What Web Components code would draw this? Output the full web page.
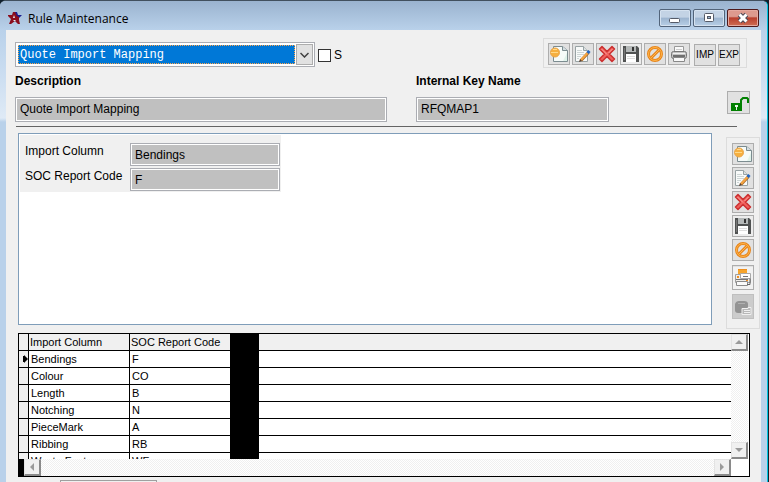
<!DOCTYPE html>
<html lang="en">
<head>
<meta charset="utf-8">
<title>Rule Maintenance</title>
<style>
    html, body {
        margin: 0;
        height: 100%;
        overflow: hidden;
        background: #10202c;
        font: 12px/14px "Liberation Sans", Arial, sans-serif;
        color: #000;
    }
    rm-window { height: 100%; }
    .top {
        display: flex;
        align-items: flex-start;
        padding: 8px 14px 0 9px;
    }
    .top rm-combo { flex: 0 1 300px; margin: 4px 3px 0 0; }
    .top rm-check { margin: 10px auto 0 0; }
    .names {
        display: flex;
        align-items: flex-start;
        padding: 6px 11px 4px 9px;
    }
    .names .description { flex: 372 1 0; margin-right: 29px; }
    .names .key { flex: 193 1 0; margin-right: 118px; }
    .names rm-button { margin-top: 17px; }
    hr {
        margin: 0 24px 6px 10px;
        border: 0;
        border-top: 1px solid #646464;
    }
    .detail {
        display: flex;
        align-items: flex-start;
        gap: 14px;
        padding: 0 1px 4px 12px;
    }
    .detail rm-panel { flex: 1; align-self: stretch; margin-bottom: 4px; }
    .detail rm-toolbar { margin-top: 4px; }
    rm-grid { margin: 0 11px 3px 12px; }
    .footer { padding-left: 54px; }
    .footer input {
        box-sizing: border-box;
        width: 97px;
        height: 23px;
        border: 1px solid #a0a0a0;
        background: #f0f0f0;
    }
</style>
</head>
<body>
<rm-window caption="Rule Maintenance">
    <div class="top">
        <rm-combo label="Rule" value="Quote Import Mapping"></rm-combo>
        <rm-check label="S"></rm-check>
        <rm-toolbar>
            <rm-button icon="new" label="New rule"></rm-button>
            <rm-button icon="edit" label="Edit rule"></rm-button>
            <rm-button icon="remove" label="Delete rule"></rm-button>
            <rm-button icon="save" label="Save rule"></rm-button>
            <rm-button icon="cancel" label="Cancel"></rm-button>
            <rm-button icon="print" label="Print"></rm-button>
            <rm-button class="text first">IMP</rm-button>
            <rm-button class="text">EXP</rm-button>
        </rm-toolbar>
    </div>
    <div class="names">
        <rm-field class="description" stacked label="Description" value="Quote Import Mapping"></rm-field>
        <rm-field class="key" stacked label="Internal Key Name" value="RFQMAP1"></rm-field>
        <rm-button class="lock" icon="unlock" label="Unlock"></rm-button>
    </div>
    <hr>
    <div class="detail">
        <rm-panel>
            <rm-field label="Import Column" value="Bendings"></rm-field>
            <rm-field label="SOC Report Code" value="F"></rm-field>
        </rm-panel>
        <rm-toolbar vertical>
            <rm-button icon="new" label="New row"></rm-button>
            <rm-button icon="edit" label="Edit row"></rm-button>
            <rm-button icon="remove" label="Delete row"></rm-button>
            <rm-button icon="save" label="Save row"></rm-button>
            <rm-button icon="cancel" label="Cancel row"></rm-button>
            <rm-button class="tall" icon="printall" label="Print rows"></rm-button>
            <rm-button class="tall" icon="paste" label="Paste" disabled></rm-button>
        </rm-toolbar>
    </div>
    <rm-grid></rm-grid>
    <div class="footer"><input aria-label="Status" readonly></div>
</rm-window>

<script>
const icons = {
    new: `<path d="M4.500 2.500h9l5 4v11h-14z" fill="#f6fbf9" stroke="#7c8c90"/>
        <path d="M13.500 2.500v4h5" fill="#d4dde0" stroke="#7c8c90"/>
        <path d="M14 17h4V9z" fill="#dff2ea"/>
        <circle cx="6" cy="8.500" r="4.500" fill="#f6b040" stroke="#eaa54a"/>
        <path d="M2 8.500h7M4 5.500h4" stroke="#ffd98a"/>`,
    edit: `<path d="M2.500 2.500h8l4 4v11h-12z" fill="#f8faf9" stroke="#98a2a4"/>
        <path d="M10.500 2.500v4h4" fill="#dce1e2" stroke="#98a2a4"/>
        <path d="M4 6.500h5M4 8.500h7M4 10.500h7M4 12.500h4M4 14.500h2" stroke="#ccd4d4"/>
        <path d="M8 16.500L15.500 8.500" stroke="#a86a2c" stroke-width="3"/>
        <path d="M8 16L15 8.500" stroke="#f6a540" stroke-width="2"/>
        <path d="M14.500 9l2-2" stroke="#2267c4" stroke-width="3"/>
        <path d="M6 18l1-3 2 2z" fill="#5a4030"/>`,
    remove: `<path d="M5 2.500L10 7.500 15 2.500 17.500 5 12.500 10 17.500 15 15 17.500 10 12.500 5 17.500 2.500 15 7.500 10 2.500 5z" fill="#f0605c" stroke="#cc3030" stroke-width="1.500" stroke-linejoin="round"/>
        <path d="M4.500 5L10 10.500M15.500 5l-4 4" stroke="#ffa49e"/>`,
    save: `<path d="M0 0h20v20H0z" fill="#ececec"/>
        <path d="M2 2h14l2 2v14H2z" fill="#505252"/>
        <path d="M5 2h10v6H5z" fill="#b4b8b8"/><path d="M11 3h2v4h-2z" fill="#333"/>
        <path d="M5 10h10v8H5z" fill="#fff"/>
        <path d="M6 12.500h8M6 14.500h8" stroke="#ddd"/><path d="M3.500 4v12" stroke="#777"/>`,
    cancel: `<circle cx="10" cy="10" r="6.500" fill="none" stroke="#e8851c" stroke-width="3"/>
        <path d="M5.500 14.500l9-9" stroke="#e8851c" stroke-width="3"/>
        <circle cx="10" cy="10" r="6.500" fill="none" stroke="#ffb64a"/>
        <path d="M5.500 14.500l9-9" stroke="#ffb64a"/>`,
    print: `<path d="M5.500 8V2.500h9V8" fill="#fafafa" stroke="#999"/>
        <path d="M7 5.500h6" stroke="#ccc"/>
        <rect x="2.500" y="7.500" width="15" height="7" rx="2" fill="#c4c4c4" stroke="#777"/>
        <path d="M4 9.500h12" stroke="#f0f0f0"/><path d="M4 12h12" stroke="#707070" stroke-width="2"/>
        <path d="M4.500 13.500h11v4h-11z" fill="#f8f8f8" stroke="#888"/>`,
    printall: `<path d="M0-1h20v23H0z" fill="#f2f2f2"/>
        <path d="M5 1h9v6H5z" fill="#f7a52c"/><path d="M5 1.500h9" stroke="#ee8f1f"/>
        <path d="M2.500 6.500h13l2 2v6h-15z" fill="#f0eeea" stroke="#a0a0a0"/>
        <path d="M7.500 5.500h10v5h-10z" fill="#fff" stroke="#aaa"/>
        <path d="M4 9h2M13 12h2" stroke="#f08d20" stroke-width="2"/>
        <path d="M3 11.500h12M10 8.500h5" stroke="#777"/>
        <path d="M3.500 13.500h11v4h-11z" fill="#fafafa" stroke="#8a8a8a"/>
        <path d="M14 16.500h3v-6" fill="none" stroke="#666"/>`,
    paste: `<path d="M2 7q1-3 4-3h5q4 0 4 3v9H5q-3 0-3-3z" fill="#939393"/>
        <path d="M5 6.500h7" stroke="#b0b0b0"/>
        <path d="M9 11.500h6v-1h3v7H9z" fill="#b8b8b8" stroke="#f0f0f0"/>
        <path d="M11 13.500h6M11 15.500h6" stroke="#f0f0f0"/>`,
    unlock: `<path d="M2 10h11v8H2z" fill="#008000"/>
        <path d="M6 12h3v2H8v3H7v-3H6z" fill="#e8f4e8"/>
        <path d="M12 11V7l2-2h4l1 1v4" fill="none" stroke="#008000" stroke-width="2"/>`
}

// Attaches an open shadow root filled with the given markup
class RmElement extends HTMLElement {
    render(html) {
        if (this.shadowRoot) return
        const template = document.createElement('template')
        template.innerHTML = html
        this.attachShadow({ mode: 'open' })
        this.shadowRoot.appendChild(template.content.cloneNode(true))
    }

    attr(name) {
        return this.getAttribute(name) || ''
    }
}

class RmWindow extends RmElement {
    connectedCallback() {
        this.render(`
            <style>
                :host {
                    display: flex;
                    flex-direction: column;
                    box-sizing: border-box;
                    border-top: 1px solid #41505e;
                    border-right: 1px solid #00c4e0;
                    margin-right: 1px;
                    border-radius: 6px 6px 0 0;
                    overflow: hidden;
                    background: #b9d1ea;
                }
                header {
                    display: flex;
                    align-items: center;
                    flex: none;
                    height: 29px;
                    padding: 0 8px 0 7px;
                    background: linear-gradient(#9ab3cf, #b9d1ea);
                }
                header svg { flex: none; }
                h1 {
                    flex: 1;
                    margin: 6px 0 0 6px;
                    font: 12px/16px "Open Sans", "Noto Sans", sans-serif;
                }
                .logo { margin-top: 4px; }
                button {
                    display: flex;
                    align-items: center;
                    justify-content: center;
                    width: 32px;
                    height: 18px;
                    margin: 5px 0 0 2px;
                    padding: 0;
                    border: 1px solid #52647a;
                    border-radius: 2px;
                    background: linear-gradient(#c3d3e5 45%, #9cb4cf 50%, #b8cfe6);
                    box-shadow: inset 0 0 0 1px #d5e2f0;
                }
                .close {
                    border-color: #4e1a1c;
                    background: linear-gradient(#dd9a8e 40%, #b93f2d 50%, #cf6e54);
                    box-shadow: inset 0 0 0 1px #e5aaa0;
                }
                main {
                    flex: 1;
                    min-height: 0;
                    overflow: hidden;
                    margin: 0 6px;
                    background: #f0f0f0;
                }
                .frame {
                    display: flex;
                    flex-direction: column;
                    flex: 1;
                    min-height: 0;
                    background: linear-gradient(#b9d1ea, #c9dcf0 40px, #dfeaf6 88px, #b9d1ea 92px);
                }
            </style>
            <header>
                <svg class="logo" width="15" height="14" viewBox="0 0 15 14">
                    <path d="M7 1h3l1 3h4l-3 3-1 2-4-4z" fill="#1a1c90"/>
                    <path d="M6 1h2l2 4 2 1v3l1 4h-2l-3-3-4 3H2l2-5-3-3V4h4z" fill="#8b0d1d"/>
                    <path d="M7 4l1 3H6zM6 9h3l-1 1H7z" fill="#e6ecf6"/>
                </svg>
                <h1>${this.attr('caption')}</h1>
                <button aria-label="Minimize"><svg width="14" height="12"><rect x="1.500" y="6.500" width="10" height="4" rx="1" fill="#fff" stroke="#555b68"/></svg></button>
                <button aria-label="Maximize"><svg width="14" height="12"><rect x="2.500" y="1.500" width="9" height="8" rx="1" fill="#fff" stroke="#555b68"/><rect x="5.500" y="4.500" width="3" height="2" fill="#9cb4cf" stroke="#555b68"/></svg></button>
                <button class="close" aria-label="Close"><svg width="14" height="12"><path d="M3.500 2.500l7 7M10.500 2.500l-7 7" stroke="#4b4a57" stroke-width="5"/><path d="M3.500 2.500l7 7M10.500 2.500l-7 7" stroke="#fff" stroke-width="3"/></svg></button>
            </header>
            <div class="frame"><main><slot></slot></main></div>
        `)
    }
}

class RmToolbar extends RmElement {
    connectedCallback() {
        this.render(`
            <style>
                :host {
                    display: flex;
                    flex: none;
                    gap: 2px;
                    padding: 4px 6px 1px 4px;
                    border: 1px solid #dcdcdc;
                }
                :host([vertical]) {
                    flex-direction: column;
                    padding: 5px 5px 9px;
                }
            </style>
            <slot></slot>
        `)
    }
}

class RmButton extends RmElement {
    connectedCallback() {
        const icon = icons[this.attr('icon')]
        this.render(`
            <style>
                :host { display: block; flex: none; width: 22px; height: 22px; }
                :host(.tall) { height: 25px; margin-top: 2px; }
                :host(.lock) { width: 23px; height: 23px; }
                :host(.text) { margin-top: 1px; }
                :host(.first) { margin-left: 2px; }
                button {
                    display: flex;
                    align-items: center;
                    justify-content: center;
                    box-sizing: border-box;
                    width: 100%;
                    height: 100%;
                    padding: 0;
                    overflow: hidden;
                    border: 1px solid #adadad;
                    background: #e1e1e1;
                    color: #000;
                    font: 10px/14px "Liberation Sans", Arial, sans-serif;
                }
                button:disabled { border-color: #bfbfbf; background: #ccc; }
                svg { flex: none; overflow: visible; }
            </style>
            <button ${icon ? `aria-label="${this.attr('label')}"` : ''} ${this.hasAttribute('disabled') ? 'disabled' : ''}>
                ${icon ? `<svg width="20" height="20" viewBox="0 0 20 20" fill="none">${icon}</svg>` : '<slot></slot>'}
            </button>
        `)
    }
}

class RmCombo extends RmElement {
    connectedCallback() {
        this.render(`
            <style>
                :host {
                    display: flex;
                    box-sizing: border-box;
                    height: 25px;
                    padding: 2px 1px 2px 2px;
                    border: 1px solid #abadb3;
                    background: #fff;
                }
                select {
                    flex: 1;
                    min-width: 0;
                    appearance: none;
                    margin: 0 1px 0 0;
                    padding: 2px 1px 0;
                    border: 1px dotted #ffa64d;
                    border-radius: 0;
                    outline: 0;
                    background: #0078d7;
                    color: #fff;
                    font: 12px/15px "Liberation Mono", "Courier New", monospace;
                }
                button {
                    width: 17px;
                    margin: -1px 0;
                    padding: 0;
                    border: 1px solid #adadad;
                    background: #e1e1e1;
                }
                svg { display: block; margin: auto; }
            </style>
            <select aria-label="${this.attr('label')}"><option>${this.attr('value')}</option></select>
            <button tabindex="-1" aria-label="Open list"><svg width="9" height="6" viewBox="0 0 9 6"><path d="M.5 1l4 4 4-4" fill="none" stroke="#404040" stroke-width="1.500"/></svg></button>
        `)
        const select = this.shadowRoot.querySelector('select')
        this.shadowRoot.querySelector('button').addEventListener('click', () => select.showPicker())
    }
}

class RmCheck extends RmElement {
    connectedCallback() {
        this.render(`
            <style>
                :host { display: block; }
                label { display: flex; align-items: center; gap: 3px; }
                input {
                    appearance: none;
                    box-sizing: border-box;
                    width: 13px;
                    height: 13px;
                    margin: 0;
                    border: 1px solid #333;
                    background: #fff;
                }
                input:checked { background: #333; box-shadow: inset 0 0 0 2px #fff; }
            </style>
            <label><input type="checkbox">${this.attr('label')}</label>
        `)
    }
}

class RmField extends RmElement {
    connectedCallback() {
        this.render(`
            <style>
                :host { display: flex; align-items: flex-start; }
                :host([stacked]) { flex-direction: column; align-items: stretch; }
                label { flex: 0 0 105px; margin-top: 1px; }
                :host([stacked]) label { flex: none; margin: 0 0 9px; font-weight: bold; }
                input {
                    box-sizing: border-box;
                    width: 150px;
                    height: 23px;
                    padding: 1px 4px 0;
                    border: 1px solid #abadb3;
                    border-radius: 0;
                    outline: 0;
                    background: #c0c0c0;
                    box-shadow: inset 0 0 0 1px #fff;
                    color: #000;
                    font: inherit;
                }
                :host([stacked]) input { width: 100%; height: 25px; padding: 0 4px 1px; }
            </style>
            <label for="value">${this.attr('label')}</label>
            <input id="value" value="${this.attr('value')}" readonly>
        `)
    }
}

class RmPanel extends RmElement {
    connectedCallback() {
        this.render(`
            <style>
                :host {
                    display: block;
                    padding: 1px;
                    border: 1px solid #7f9db9;
                    background: #fff;
                }
                .fields {
                    display: inline-flex;
                    flex-direction: column;
                    gap: 2px;
                    padding: 8px 1px 1px 5px;
                    background: #f0f0f0;
                }
            </style>
            <div class="fields"><slot></slot></div>
        `)
    }
}

const rows = [
    ['Bendings', 'F'],
    ['Colour', 'CO'],
    ['Length', 'B'],
    ['Notching', 'N'],
    ['PieceMark', 'A'],
    ['Ribbing', 'RB'],
    ['Waste Factor', 'WF']
]

class RmGrid extends RmElement {
    connectedCallback() {
        const arrow = (d) => `<svg width="8" height="8" viewBox="0 0 8 8"><path d="${d}" fill="#9a9a9a"/></svg>`
        this.render(`
            <style>
                :host {
                    display: grid;
                    grid-template-columns: 1fr 18px;
                    grid-template-rows: 125px 17px;
                    border: 1px solid #000;
                    background: #fff;
                    font-size: 11px;
                    line-height: 14px;
                }
                .view { overflow: hidden; }
                table {
                    width: 100%;
                    table-layout: fixed;
                    border-spacing: 0;
                }
                th, td {
                    box-sizing: border-box;
                    height: 17px;
                    padding: 0 0 0 2px;
                    overflow: hidden;
                    border: solid #000;
                    border-width: 0 1px 1px 0;
                    background: #fff;
                    font-weight: normal;
                    text-align: left;
                    white-space: nowrap;
                }
                thead th { padding-left: 1px; background: #f0f0f0; }
                tbody th { padding: 0 0 0 4px; background: #f0f0f0; }
                tbody th svg { display: block; }
                .gap { background: #000; }
                th:last-child, td:last-child { border-right: 0; }
                .mark { width: 10px; }
                .name, .code { width: 101px; }
                .dark { width: 28px; }
                .vertical, .horizontal {
                    display: flex;
                    justify-content: space-between;
                    background: conic-gradient(#f0f0f0 25%, #fff 0 50%, #f0f0f0 0 75%, #fff 0) 0 0 / 2px 2px;
                }
                .vertical { flex-direction: column; margin-right: 1px; }
                .horizontal { border-left: 5px solid #000; }
                button {
                    display: flex;
                    align-items: center;
                    justify-content: center;
                    box-sizing: border-box;
                    width: 17px;
                    height: 17px;
                    padding: 0;
                    border: solid;
                    border-width: 1px 2px 2px 1px;
                    border-color: #e3e3e3 #8a8a8a #8a8a8a #e3e3e3;
                    background: #f0f0f0;
                }
            </style>
            <div class="view">
                <table>
                    <colgroup><col class="mark"><col class="name"><col class="code"><col class="dark"><col></colgroup>
                    <thead><tr><th></th><th>Import Column</th><th>SOC Report Code</th><th class="gap"></th><th></th></tr></thead>
                    <tbody>
                        ${rows.map(([name, code], i) => `<tr>
                            <th>${i ? '' : '<svg width="5" height="8" viewBox="0 0 5 8"><path d="M0 1h1V0l4 4-4 4V7H0z"/></svg>'}</th>
                            <td>${name}</td><td>${code}</td><td class="gap"></td><td></td>
                        </tr>`).join('')}
                    </tbody>
                </table>
            </div>
            <div class="vertical">
                <button aria-label="Scroll up">${arrow('M0 6l4-4 4 4z')}</button>
                <button aria-label="Scroll down">${arrow('M0 2l4 4 4-4z')}</button>
            </div>
            <div class="horizontal">
                <button aria-label="Scroll left">${arrow('M6 0L2 4l4 4z')}</button>
                <button aria-label="Scroll right">${arrow('M2 0l4 4-4 4z')}</button>
            </div>
        `)
        // One row per click
        const view = this.shadowRoot.querySelector('.view')
        const [up, down] = this.shadowRoot.querySelectorAll('.vertical button')
        up.addEventListener('click', () => view.scrollTop -= 17)
        down.addEventListener('click', () => view.scrollTop += 17)
    }
}

customElements.define('rm-window', RmWindow)
customElements.define('rm-toolbar', RmToolbar)
customElements.define('rm-button', RmButton)
customElements.define('rm-combo', RmCombo)
customElements.define('rm-check', RmCheck)
customElements.define('rm-field', RmField)
customElements.define('rm-panel', RmPanel)
customElements.define('rm-grid', RmGrid)
</script>
</body>
</html>
